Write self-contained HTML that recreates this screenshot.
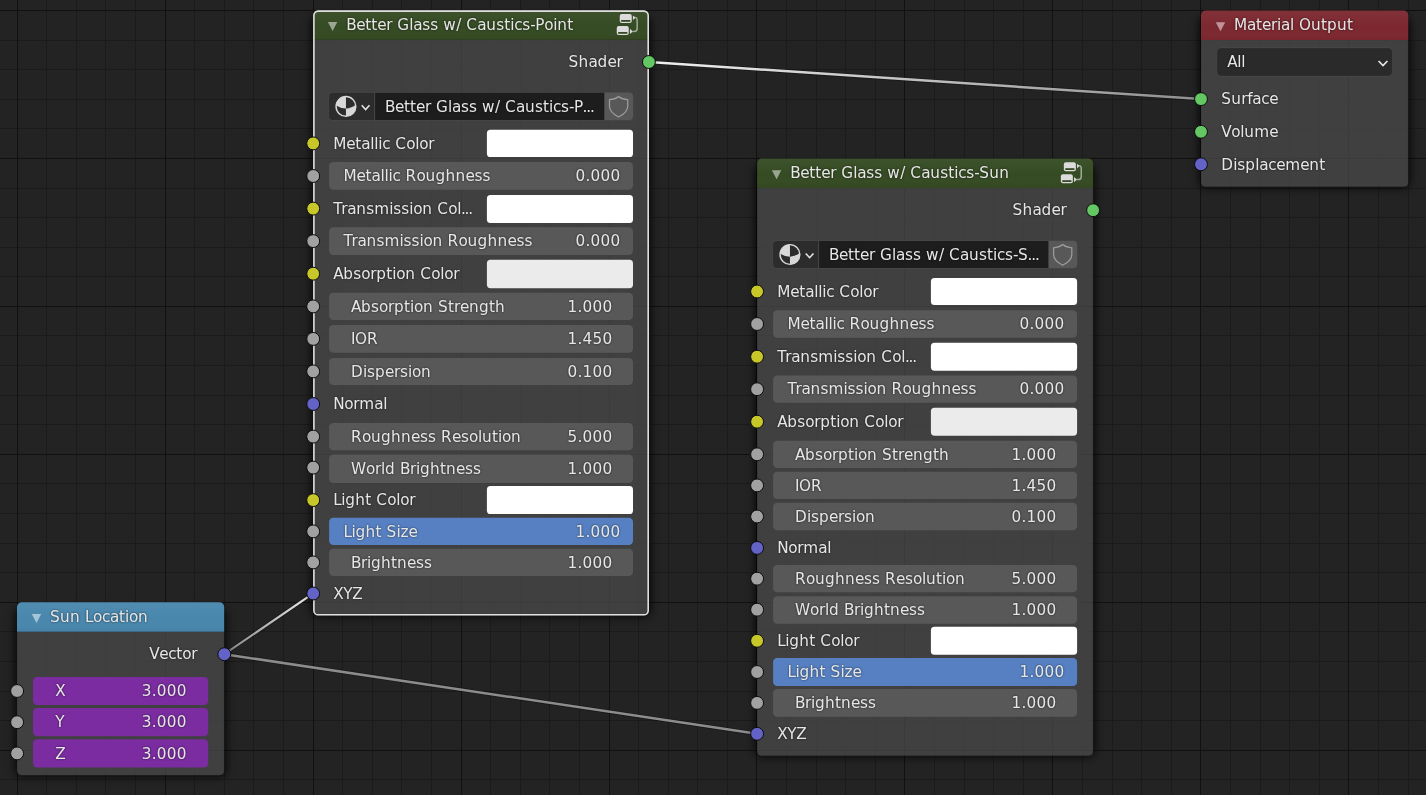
<!DOCTYPE html>
<html lang="en"><head><meta charset="utf-8"><title>Node Editor</title>
<style>html,body{margin:0;padding:0;background:#232323;overflow:hidden}svg{display:block}.t{font-family:"DejaVu Sans","Liberation Sans",sans-serif;font-size:15.25px;fill:#e6e6e6;filter:drop-shadow(0 0.8px 0.9px rgba(0,0,0,0.6))}</style></head><body>
<svg width="1426" height="795" viewBox="0 0 1426 795">
<defs><filter id="sh" x="-20%" y="-20%" width="140%" height="140%"><feGaussianBlur stdDeviation="4.5"/></filter>
<linearGradient id="g1" gradientUnits="userSpaceOnUse" x1="649.1" y1="62" x2="1201" y2="99.1"><stop offset="0" stop-color="#f0f0f0"/><stop offset="1" stop-color="#8f8f8f"/></linearGradient>
<linearGradient id="g2" gradientUnits="userSpaceOnUse" x1="224.3" y1="654.2" x2="313.2" y2="593.4"><stop offset="0" stop-color="#828282"/><stop offset="1" stop-color="#f0f0f0"/></linearGradient>
<linearGradient id="hg" x1="0" y1="0" x2="0" y2="1"><stop offset="0" stop-color="#fff" stop-opacity="0.045"/><stop offset="0.55" stop-color="#fff" stop-opacity="0"/><stop offset="1" stop-color="#000" stop-opacity="0.035"/></linearGradient>
</defs>
<rect width="1426" height="795" fill="#232323"/>
<path d="M46.5 0V795M76.5 0V795M105.5 0V795M135.5 0V795M194.5 0V795M224.5 0V795M253.5 0V795M283.5 0V795M342.5 0V795M372.5 0V795M401.5 0V795M431.5 0V795M490.5 0V795M520.5 0V795M549.5 0V795M579.5 0V795M638.5 0V795M668.5 0V795M697.5 0V795M727.5 0V795M786.5 0V795M816.5 0V795M845.5 0V795M875.5 0V795M934.5 0V795M964.5 0V795M993.5 0V795M1023.5 0V795M1082.5 0V795M1112.5 0V795M1141.5 0V795M1171.5 0V795M1230.5 0V795M1260.5 0V795M1289.5 0V795M1319.5 0V795M1378.5 0V795M1408.5 0V795M0 40.5H1426M0 69.5H1426M0 99.5H1426M0 128.5H1426M0 188.5H1426M0 217.5H1426M0 247.5H1426M0 276.5H1426M0 335.5H1426M0 365.5H1426M0 395.5H1426M0 424.5H1426M0 483.5H1426M0 513.5H1426M0 543.5H1426M0 572.5H1426M0 631.5H1426M0 661.5H1426M0 691.5H1426M0 720.5H1426M0 779.5H1426" stroke="#1b1b1b" stroke-width="1" fill="none" shape-rendering="crispEdges"/>
<path d="M17.5 0V795M165.5 0V795M313.5 0V795M461.5 0V795M609.5 0V795M756.5 0V795M904.5 0V795M1052.5 0V795M1200.5 0V795M1348.5 0V795M0 10.5H1426M0 158.5H1426M0 306.5H1426M0 454.5H1426M0 602.5H1426M0 750.5H1426" stroke="#111111" stroke-width="1" fill="none" shape-rendering="crispEdges"/>
<line x1="649.1" y1="62" x2="1201" y2="99.1" stroke="#000" stroke-opacity="0.28" stroke-width="4.2"/>
<line x1="649.1" y1="62" x2="1201" y2="99.1" stroke="url(#g1)" stroke-width="2.5"/>
<line x1="224.3" y1="654.2" x2="313.2" y2="593.4" stroke="#000" stroke-opacity="0.28" stroke-width="3.85"/>
<line x1="224.3" y1="654.2" x2="313.2" y2="593.4" stroke="url(#g2)" stroke-width="2.15"/>
<line x1="224.3" y1="654.2" x2="757" y2="733.8" stroke="#000" stroke-opacity="0.28" stroke-width="4.2"/>
<line x1="224.3" y1="654.2" x2="757" y2="733.8" stroke="#8c8c8c" stroke-width="2.5"/>
<clipPath id="c1"><path clip-rule="evenodd" d="M0 0H1426V795H0Z M313.6 10.8H648.5V615.1H313.6Z"/></clipPath>
<g clip-path="url(#c1)"><rect x="311.1" y="16.3" width="339.9" height="600.3" rx="7" fill="#000" opacity="0.8" filter="url(#sh)"/></g>
<path d="M313.1 39.8H649V610.8a4.8 4.8 0 0 1 -4.8 4.8H317.9a4.8 4.8 0 0 1 -4.8 -4.8Z" fill="rgba(74,74,74,0.74)"/>
<path d="M313.1 39.8V15.1a4.8 4.8 0 0 1 4.8 -4.8H644.2a4.8 4.8 0 0 1 4.8 4.8V39.8Z" fill="#354b23"/>
<path d="M313.1 39.8V15.1a4.8 4.8 0 0 1 4.8 -4.8H644.2a4.8 4.8 0 0 1 4.8 4.8V39.8Z" fill="url(#hg)"/>
<rect x="313.9" y="11.1" width="334.3" height="603.7" rx="4.4" fill="none" stroke="#dedede" stroke-width="1.6"/>
<path d="M327.9 22.1h9.4l-4.7 9z" fill="#ffffff" fill-opacity="0.5"/>
<text class="t" x="346.2 356.2 365.2 371.2 377.2 386.2 392.2 397.2 409.2 413.2 422.2 430.2 438.2 443.2 456.2 461.2 466.2 477.2 486.2 496.2 504.2 510.2 514.2 522.2 530.2 535.2 544.2 553.2 557.2 567.2" y="30">Better Glass w/ Caustics-Point</text>
<g transform="translate(619.75 14.1)">
<rect x="0" y="0" width="12" height="9" rx="2" fill="#dcdcdc"/><rect x="1.4" y="5.9" width="9.2" height="1.8" fill="#354b23"/>
<rect x="-3" y="12" width="12" height="9" rx="2" fill="#dcdcdc"/><rect x="-1.6" y="17.9" width="9.2" height="1.8" fill="#354b23"/>
<path d="M13.2 1.7V6L16.1 3.5Z M10.2 14.7V19.9L13 17.3Z" fill="#dcdcdc"/>
<path d="M15.8 3.4Q17.4 3.8 17.4 6V14.4Q17.4 17.3 14.6 17.3H12.6" fill="none" stroke="#dcdcdc" stroke-opacity="0.65" stroke-width="1.5"/>
</g>
<text class="t" x="568.4 578.4 588.4 597.4 607.4 616.4" y="67">Shader</text>
<rect x="328.4" y="92.1" width="305.3" height="28.6" rx="4.6" fill="#474747"/>
<path d="M333.1 92.8H374.1V120H333.1a4 4 0 0 1 -4 -4V96.8a4 4 0 0 1 4 -4Z" fill="#2c2c2c"/>
<rect x="375.1" y="92.8" width="229.1" height="27.2" fill="#1d1d1d"/>
<path d="M604.7 92.8H629a4 4 0 0 1 4 4V116a4 4 0 0 1 -4 4H604.7Z" fill="#585858"/>
<g transform="translate(345.95 106.4)">
<circle r="9.9" fill="none" stroke="#d8d8d8" stroke-width="1.4"/>
<path d="M-9.9 -0.9A9.9 9.9 0 0 1 0 -9.9V2.2Q-5.5 1.9 -9.9 -0.9Z M0 2.2Q6 1.7 9.8 -1.6A9.9 9.9 0 0 1 0 9.9Z" fill="#d8d8d8"/>
</g>
<path d="M361.7 105.3l3.9 4.3l3.9 -4.3" fill="none" stroke="#e6e6e6" stroke-width="1.55"/>
<g transform="translate(604.7 92.8)">
<path d="M13.9 3.6C11.2 5.8 7.8 6.7 4.8 6.8V13.5C4.8 18.6 9 21.8 13.9 24.2C18.8 21.8 23 18.6 23 13.5V6.8C20 6.7 16.6 5.8 13.9 3.6Z" fill="none" stroke="#9c9c9c" stroke-width="1.25"/>
</g>
<text class="t" x="384.9 394.9 403.9 409.9 415.9 424.9 430.9 435.9 447.9 451.9 460.9 468.9 476.9 481.9 494.9 499.9 504.9 515.9 524.9 534.9 542.9 548.9 552.9 560.9 568.9 573.9 582.6 586.3 590" y="112">Better Glass w/ Caustics-P...</text>
<text class="t" x="333.2 346.2 355.2 361.2 370.2 374.2 378.2 382.2 390.2 395.2 406.2 415.2 419.2 428.2" y="149">Metallic Color</text>
<rect x="486.9" y="129.8" width="146.1" height="27.2" rx="3.6" fill="#ffffff"/>
<circle cx="313.2" cy="143.4" r="6.45" fill="#c7c729" stroke="#0c0c0c" stroke-width="1"/>
<rect x="329.1" y="161.97" width="303.9" height="27.73" rx="4.2" fill="#585858"/>
<text class="t" x="343.6 356.6 365.6 371.6 380.6 384.6 388.6 392.6 400.6 405.6 416.6 425.6 435.6 445.6 455.6 465.6 474.6 482.6" y="181">Metallic Roughness</text>
<text class="t" x="575.5 585.5 590.5 600.5 610.5" y="181">0.000</text>
<circle cx="313.2" cy="176" r="6.45" fill="#a1a1a1" stroke="#0c0c0c" stroke-width="1"/>
<text class="t" x="333.2 341.2 347.2 356.2 366.2 374.2 389.2 393.2 401.2 409.2 413.2 422.2 432.2 437.2 448.2 457.2 460.9 464.6 468.3" y="214">Transmission Col...</text>
<rect x="486.9" y="195.07" width="146.1" height="28.03" rx="3.6" fill="#ffffff"/>
<circle cx="313.2" cy="208.6" r="6.45" fill="#c7c729" stroke="#0c0c0c" stroke-width="1"/>
<rect x="329.1" y="227.2" width="303.9" height="27.7" rx="4.2" fill="#585858"/>
<text class="t" x="343.6 351.6 357.6 366.6 376.6 384.6 399.6 403.6 411.6 419.6 423.6 432.6 442.6 447.6 458.6 467.6 477.6 487.6 497.6 507.6 516.6 524.6" y="246">Transmission Roughness</text>
<text class="t" x="575.5 585.5 590.5 600.5 610.5" y="246">0.000</text>
<circle cx="313.2" cy="241.1" r="6.45" fill="#a1a1a1" stroke="#0c0c0c" stroke-width="1"/>
<text class="t" x="333.2 343.2 353.2 361.2 370.2 376.2 386.2 392.2 396.2 405.2 415.2 420.2 431.2 440.2 444.2 453.2" y="279">Absorption Color</text>
<rect x="486.9" y="259.8" width="146.1" height="28.35" rx="3.6" fill="#ebebeb"/>
<circle cx="313.2" cy="273.7" r="6.45" fill="#c7c729" stroke="#0c0c0c" stroke-width="1"/>
<rect x="329.1" y="292.75" width="303.9" height="27.3" rx="4.2" fill="#585858"/>
<text class="t" x="351.1 361.1 371.1 379.1 388.1 394.1 404.1 410.1 414.1 423.1 433.1 438.1 448.1 454.1 460.1 469.1 479.1 489.1 495.1" y="312">Absorption Strength</text>
<text class="t" x="567.5 577.5 582.5 592.5 602.5" y="312">1.000</text>
<circle cx="313.2" cy="306.4" r="6.45" fill="#a1a1a1" stroke="#0c0c0c" stroke-width="1"/>
<rect x="329.1" y="325.06" width="303.9" height="27.74" rx="4.2" fill="#585858"/>
<text class="t" x="351.1 355.1 367.1" y="344">IOR</text>
<text class="t" x="567.5 577.5 582.5 592.5 602.5" y="344">1.450</text>
<circle cx="313.2" cy="338.9" r="6.45" fill="#a1a1a1" stroke="#0c0c0c" stroke-width="1"/>
<rect x="329.1" y="358" width="303.9" height="26.95" rx="4.2" fill="#585858"/>
<text class="t" x="351.1 363.1 367.1 375.1 385.1 394.1 400.1 408.1 412.1 421.1" y="377">Dispersion</text>
<text class="t" x="567.5 577.5 582.5 592.5 602.5" y="377">0.100</text>
<circle cx="313.2" cy="371.4" r="6.45" fill="#a1a1a1" stroke="#0c0c0c" stroke-width="1"/>
<text class="t" x="333.2 344.2 353.2 359.2 374.2 383.2" y="409">Normal</text>
<circle cx="313.2" cy="404" r="6.45" fill="#6363c7" stroke="#0c0c0c" stroke-width="1"/>
<rect x="329.1" y="422.95" width="303.9" height="27.3" rx="4.2" fill="#585858"/>
<text class="t" x="351.1 362.1 371.1 381.1 391.1 401.1 411.1 420.1 428.1 436.1 441.1 452.1 461.1 469.1 478.1 482.1 492.1 498.1 502.1 511.1" y="442">Roughness Resolution</text>
<text class="t" x="567.5 577.5 582.5 592.5 602.5" y="442">5.000</text>
<circle cx="313.2" cy="436.6" r="6.45" fill="#a1a1a1" stroke="#0c0c0c" stroke-width="1"/>
<rect x="329.1" y="454.6" width="303.9" height="28.3" rx="4.2" fill="#585858"/>
<text class="t" x="351.1 366.1 375.1 381.1 385.1 395.1 400.1 410.1 416.1 420.1 430.1 440.1 446.1 456.1 465.1 473.1" y="474">World Brightness</text>
<text class="t" x="567.5 577.5 582.5 592.5 602.5" y="474">1.000</text>
<circle cx="313.2" cy="467.6" r="6.45" fill="#a1a1a1" stroke="#0c0c0c" stroke-width="1"/>
<text class="t" x="333.2 341.2 345.2 355.2 365.2 371.2 376.2 387.2 396.2 400.2 409.2" y="505">Light Color</text>
<rect x="486.9" y="486.1" width="146.1" height="27.9" rx="3.6" fill="#ffffff"/>
<circle cx="313.2" cy="500.1" r="6.45" fill="#c7c729" stroke="#0c0c0c" stroke-width="1"/>
<rect x="329.1" y="517.75" width="303.9" height="27.3" rx="4.2" fill="#5680c2"/>
<text class="t" x="343.6 351.6 355.6 365.6 375.6 381.6 386.6 396.6 400.6 408.6" y="537">Light Size</text>
<text class="t" x="575.5 585.5 590.5 600.5 610.5" y="537">1.000</text>
<circle cx="313.2" cy="531.4" r="6.45" fill="#a1a1a1" stroke="#0c0c0c" stroke-width="1"/>
<rect x="329.1" y="548.75" width="303.9" height="27.3" rx="4.2" fill="#585858"/>
<text class="t" x="351.1 361.1 367.1 371.1 381.1 391.1 397.1 407.1 416.1 424.1" y="568">Brightness</text>
<text class="t" x="567.5 577.5 582.5 592.5 602.5" y="568">1.000</text>
<circle cx="313.2" cy="562.4" r="6.45" fill="#a1a1a1" stroke="#0c0c0c" stroke-width="1"/>
<text class="t" x="333.2 343.2 352.2" y="599">XYZ</text>
<circle cx="313.2" cy="593.5" r="6.45" fill="#6363c7" stroke="#0c0c0c" stroke-width="1"/>
<circle cx="648.9" cy="62" r="6.45" fill="#63c763" stroke="#0c0c0c" stroke-width="1"/>
<clipPath id="c2"><path clip-rule="evenodd" d="M0 0H1426V795H0Z M757.6 159H1092.6V755.3H757.6Z"/></clipPath>
<g clip-path="url(#c2)"><rect x="755.1" y="164.5" width="340" height="592.3" rx="7" fill="#000" opacity="0.8" filter="url(#sh)"/></g>
<path d="M757.1 188H1093.1V751a4.8 4.8 0 0 1 -4.8 4.8H761.9a4.8 4.8 0 0 1 -4.8 -4.8Z" fill="rgba(74,74,74,0.74)"/>
<path d="M757.1 188V163.3a4.8 4.8 0 0 1 4.8 -4.8H1088.3a4.8 4.8 0 0 1 4.8 4.8V188Z" fill="#354b23"/>
<path d="M757.1 188V163.3a4.8 4.8 0 0 1 4.8 -4.8H1088.3a4.8 4.8 0 0 1 4.8 4.8V188Z" fill="url(#hg)"/>
<path d="M771.9 170.3h9.4l-4.7 9z" fill="#ffffff" fill-opacity="0.5"/>
<text class="t" x="790.2 800.2 809.2 815.2 821.2 830.2 836.2 841.2 853.2 857.2 866.2 874.2 882.2 887.2 900.2 905.2 910.2 921.2 930.2 940.2 948.2 954.2 958.2 966.2 974.2 979.2 989.2 999.2" y="178">Better Glass w/ Caustics-Sun</text>
<g transform="translate(1063.85 162.3)">
<rect x="0" y="0" width="12" height="9" rx="2" fill="#dcdcdc"/><rect x="1.4" y="5.9" width="9.2" height="1.8" fill="#354b23"/>
<rect x="-3" y="12" width="12" height="9" rx="2" fill="#dcdcdc"/><rect x="-1.6" y="17.9" width="9.2" height="1.8" fill="#354b23"/>
<path d="M13.2 1.7V6L16.1 3.5Z M10.2 14.7V19.9L13 17.3Z" fill="#dcdcdc"/>
<path d="M15.8 3.4Q17.4 3.8 17.4 6V14.4Q17.4 17.3 14.6 17.3H12.6" fill="none" stroke="#dcdcdc" stroke-opacity="0.65" stroke-width="1.5"/>
</g>
<text class="t" x="1012.5 1022.5 1032.5 1041.5 1051.5 1060.5" y="215">Shader</text>
<rect x="772.4" y="240.3" width="305.4" height="28.4" rx="4.6" fill="#474747"/>
<path d="M777.1 241H818.1V268H777.1a4 4 0 0 1 -4 -4V245a4 4 0 0 1 4 -4Z" fill="#2c2c2c"/>
<rect x="819.1" y="241" width="229.2" height="27" fill="#1d1d1d"/>
<path d="M1048.8 241H1073.1a4 4 0 0 1 4 4V264a4 4 0 0 1 -4 4H1048.8Z" fill="#585858"/>
<g transform="translate(789.95 254.5)">
<circle r="9.9" fill="none" stroke="#d8d8d8" stroke-width="1.4"/>
<path d="M-9.9 -0.9A9.9 9.9 0 0 1 0 -9.9V2.2Q-5.5 1.9 -9.9 -0.9Z M0 2.2Q6 1.7 9.8 -1.6A9.9 9.9 0 0 1 0 9.9Z" fill="#d8d8d8"/>
</g>
<path d="M805.7 253.4l3.9 4.3l3.9 -4.3" fill="none" stroke="#e6e6e6" stroke-width="1.55"/>
<g transform="translate(1048.8 241)">
<path d="M13.9 3.6C11.2 5.8 7.8 6.7 4.8 6.8V13.5C4.8 18.6 9 21.8 13.9 24.2C18.8 21.8 23 18.6 23 13.5V6.8C20 6.7 16.6 5.8 13.9 3.6Z" fill="none" stroke="#9c9c9c" stroke-width="1.25"/>
</g>
<text class="t" x="828.9 838.9 847.9 853.9 859.9 868.9 874.9 879.9 891.9 895.9 904.9 912.9 920.9 925.9 938.9 943.9 948.9 959.9 968.9 978.9 986.9 992.9 996.9 1004.9 1012.9 1017.9 1027.6 1031.3 1035" y="260">Better Glass w/ Caustics-S...</text>
<text class="t" x="777.2 790.2 799.2 805.2 814.2 818.2 822.2 826.2 834.2 839.2 850.2 859.2 863.2 872.2" y="297">Metallic Color</text>
<rect x="930.9" y="277.9" width="146.2" height="27.2" rx="3.6" fill="#ffffff"/>
<circle cx="757.1" cy="291.5" r="6.45" fill="#c7c729" stroke="#0c0c0c" stroke-width="1"/>
<rect x="773.1" y="310.35" width="304" height="27.3" rx="4.2" fill="#585858"/>
<text class="t" x="787.6 800.6 809.6 815.6 824.6 828.6 832.6 836.6 844.6 849.6 860.6 869.6 879.6 889.6 899.6 909.6 918.6 926.6" y="329">Metallic Roughness</text>
<text class="t" x="1019.6 1029.6 1034.6 1044.6 1054.6" y="329">0.000</text>
<circle cx="757.1" cy="324" r="6.45" fill="#a1a1a1" stroke="#0c0c0c" stroke-width="1"/>
<text class="t" x="777.2 785.2 791.2 800.2 810.2 818.2 833.2 837.2 845.2 853.2 857.2 866.2 876.2 881.2 892.2 901.2 904.9 908.6 912.3" y="362">Transmission Col...</text>
<rect x="930.9" y="342.7" width="146.2" height="28" rx="3.6" fill="#ffffff"/>
<circle cx="757.1" cy="356.7" r="6.45" fill="#c7c729" stroke="#0c0c0c" stroke-width="1"/>
<rect x="773.1" y="375.55" width="304" height="27.3" rx="4.2" fill="#585858"/>
<text class="t" x="787.6 795.6 801.6 810.6 820.6 828.6 843.6 847.6 855.6 863.6 867.6 876.6 886.6 891.6 902.6 911.6 921.6 931.6 941.6 951.6 960.6 968.6" y="394">Transmission Roughness</text>
<text class="t" x="1019.6 1029.6 1034.6 1044.6 1054.6" y="394">0.000</text>
<circle cx="757.1" cy="389.2" r="6.45" fill="#a1a1a1" stroke="#0c0c0c" stroke-width="1"/>
<text class="t" x="777.2 787.2 797.2 805.2 814.2 820.2 830.2 836.2 840.2 849.2 859.2 864.2 875.2 884.2 888.2 897.2" y="427">Absorption Color</text>
<rect x="930.9" y="407.7" width="146.2" height="28" rx="3.6" fill="#ebebeb"/>
<circle cx="757.1" cy="421.7" r="6.45" fill="#c7c729" stroke="#0c0c0c" stroke-width="1"/>
<rect x="773.1" y="440.65" width="304" height="27.3" rx="4.2" fill="#585858"/>
<text class="t" x="795.1 805.1 815.1 823.1 832.1 838.1 848.1 854.1 858.1 867.1 877.1 882.1 892.1 898.1 904.1 913.1 923.1 933.1 939.1" y="460">Absorption Strength</text>
<text class="t" x="1011.6 1021.6 1026.6 1036.6 1046.6" y="460">1.000</text>
<circle cx="757.1" cy="454.3" r="6.45" fill="#a1a1a1" stroke="#0c0c0c" stroke-width="1"/>
<rect x="773.1" y="471.75" width="304" height="27.3" rx="4.2" fill="#585858"/>
<text class="t" x="795.1 799.1 811.1" y="491">IOR</text>
<text class="t" x="1011.6 1021.6 1026.6 1036.6 1046.6" y="491">1.450</text>
<circle cx="757.1" cy="485.4" r="6.45" fill="#a1a1a1" stroke="#0c0c0c" stroke-width="1"/>
<rect x="773.1" y="502.85" width="304" height="27.3" rx="4.2" fill="#585858"/>
<text class="t" x="795.1 807.1 811.1 819.1 829.1 838.1 844.1 852.1 856.1 865.1" y="522">Dispersion</text>
<text class="t" x="1011.6 1021.6 1026.6 1036.6 1046.6" y="522">0.100</text>
<circle cx="757.1" cy="516.5" r="6.45" fill="#a1a1a1" stroke="#0c0c0c" stroke-width="1"/>
<text class="t" x="777.2 788.2 797.2 803.2 818.2 827.2" y="553">Normal</text>
<circle cx="757.1" cy="547.9" r="6.45" fill="#6363c7" stroke="#0c0c0c" stroke-width="1"/>
<rect x="773.1" y="565.05" width="304" height="27.3" rx="4.2" fill="#585858"/>
<text class="t" x="795.1 806.1 815.1 825.1 835.1 845.1 855.1 864.1 872.1 880.1 885.1 896.1 905.1 913.1 922.1 926.1 936.1 942.1 946.1 955.1" y="584">Roughness Resolution</text>
<text class="t" x="1011.6 1021.6 1026.6 1036.6 1046.6" y="584">5.000</text>
<circle cx="757.1" cy="578.7" r="6.45" fill="#a1a1a1" stroke="#0c0c0c" stroke-width="1"/>
<rect x="773.1" y="596.2" width="304" height="27.6" rx="4.2" fill="#585858"/>
<text class="t" x="795.1 810.1 819.1 825.1 829.1 839.1 844.1 854.1 860.1 864.1 874.1 884.1 890.1 900.1 909.1 917.1" y="615">World Brightness</text>
<text class="t" x="1011.6 1021.6 1026.6 1036.6 1046.6" y="615">1.000</text>
<circle cx="757.1" cy="609.7" r="6.45" fill="#a1a1a1" stroke="#0c0c0c" stroke-width="1"/>
<text class="t" x="777.2 785.2 789.2 799.2 809.2 815.2 820.2 831.2 840.2 844.2 853.2" y="646">Light Color</text>
<rect x="930.9" y="626.8" width="146.2" height="28" rx="3.6" fill="#ffffff"/>
<circle cx="757.1" cy="640.8" r="6.45" fill="#c7c729" stroke="#0c0c0c" stroke-width="1"/>
<rect x="773.1" y="658" width="304" height="28.1" rx="4.2" fill="#5680c2"/>
<text class="t" x="787.6 795.6 799.6 809.6 819.6 825.6 830.6 840.6 844.6 852.6" y="677">Light Size</text>
<text class="t" x="1019.6 1029.6 1034.6 1044.6 1054.6" y="677">1.000</text>
<circle cx="757.1" cy="672" r="6.45" fill="#a1a1a1" stroke="#0c0c0c" stroke-width="1"/>
<rect x="773.1" y="689" width="304" height="27.8" rx="4.2" fill="#585858"/>
<text class="t" x="795.1 805.1 811.1 815.1 825.1 835.1 841.1 851.1 860.1 868.1" y="708">Brightness</text>
<text class="t" x="1011.6 1021.6 1026.6 1036.6 1046.6" y="708">1.000</text>
<circle cx="757.1" cy="702.9" r="6.45" fill="#a1a1a1" stroke="#0c0c0c" stroke-width="1"/>
<text class="t" x="777.2 787.2 796.2" y="739">XYZ</text>
<circle cx="757.1" cy="733.8" r="6.45" fill="#6363c7" stroke="#0c0c0c" stroke-width="1"/>
<circle cx="1093.1" cy="210.2" r="6.45" fill="#63c763" stroke="#0c0c0c" stroke-width="1"/>
<clipPath id="c3"><path clip-rule="evenodd" d="M0 0H1426V795H0Z M17.5 602.8H223.7V774.7H17.5Z"/></clipPath>
<g clip-path="url(#c3)"><rect x="15" y="608.3" width="211.2" height="167.9" rx="7" fill="#000" opacity="0.8" filter="url(#sh)"/></g>
<path d="M17 631.8H224.2V770.4a4.8 4.8 0 0 1 -4.8 4.8H21.8a4.8 4.8 0 0 1 -4.8 -4.8Z" fill="rgba(74,74,74,0.74)"/>
<path d="M17 631.8V607.1a4.8 4.8 0 0 1 4.8 -4.8H219.4a4.8 4.8 0 0 1 4.8 4.8V631.8Z" fill="#4987ad"/>
<path d="M17 631.8V607.1a4.8 4.8 0 0 1 4.8 -4.8H219.4a4.8 4.8 0 0 1 4.8 4.8V631.8Z" fill="url(#hg)"/>
<path d="M31.8 614.1h9.4l-4.7 9z" fill="#ffffff" fill-opacity="0.5"/>
<text class="t" x="50.1 60.1 70.1 80.1 85.1 93.1 102.1 110.1 119.1 125.1 129.1 138.1" y="622">Sun Location</text>
<text class="t" x="149.3 159.3 168.3 176.3 182.3 191.3" y="659">Vector</text>
<rect x="33" y="676.9" width="175.2" height="28.2" rx="4.2" fill="#7a2ca0"/>
<text class="t" x="55.3" y="696">X</text>
<text class="t" x="141.8 151.8 156.8 166.8 176.8" y="696">3.000</text>
<circle cx="17.1" cy="691" r="6.45" fill="#a1a1a1" stroke="#0c0c0c" stroke-width="1"/>
<rect x="33" y="708.1" width="175.2" height="28.2" rx="4.2" fill="#7a2ca0"/>
<text class="t" x="55.3" y="727">Y</text>
<text class="t" x="141.8 151.8 156.8 166.8 176.8" y="727">3.000</text>
<circle cx="17.1" cy="722.2" r="6.45" fill="#a1a1a1" stroke="#0c0c0c" stroke-width="1"/>
<rect x="33" y="739.3" width="175.2" height="28.2" rx="4.2" fill="#7a2ca0"/>
<text class="t" x="55.3" y="759">Z</text>
<text class="t" x="141.8 151.8 156.8 166.8 176.8" y="759">3.000</text>
<circle cx="17.1" cy="753.4" r="6.45" fill="#a1a1a1" stroke="#0c0c0c" stroke-width="1"/>
<circle cx="224.3" cy="654.2" r="6.45" fill="#6363c7" stroke="#0c0c0c" stroke-width="1"/>
<clipPath id="c4"><path clip-rule="evenodd" d="M0 0H1426V795H0Z M1201.5 11H1407.8V186.3H1201.5Z"/></clipPath>
<g clip-path="url(#c4)"><rect x="1199" y="16.5" width="211.3" height="171.3" rx="7" fill="#000" opacity="0.8" filter="url(#sh)"/></g>
<path d="M1201 40H1408.3V182a4.8 4.8 0 0 1 -4.8 4.8H1205.8a4.8 4.8 0 0 1 -4.8 -4.8Z" fill="rgba(74,74,74,0.74)"/>
<path d="M1201 40V15.3a4.8 4.8 0 0 1 4.8 -4.8H1403.5a4.8 4.8 0 0 1 4.8 4.8V40Z" fill="#7d2830"/>
<path d="M1201 40V15.3a4.8 4.8 0 0 1 4.8 -4.8H1403.5a4.8 4.8 0 0 1 4.8 4.8V40Z" fill="url(#hg)"/>
<path d="M1215.8 22.3h9.4l-4.7 9z" fill="#ffffff" fill-opacity="0.5"/>
<text class="t" x="1234.1 1247.1 1256.1 1262.1 1271.1 1277.1 1281.1 1290.1 1294.1 1299.1 1311.1 1321.1 1327.1 1337.1 1347.1" y="30">Material Output</text>
<rect x="1216.9" y="47.9" width="175.4" height="28.2" rx="4.2" fill="#2a2a2a" stroke="#fff" stroke-opacity="0.05" stroke-width="1"/>
<text class="t" x="1227.3 1237.3 1241.3" y="67">All</text>
<path d="M1378.6 61l4.4 4.5l4.4 -4.5" fill="none" stroke="#e6e6e6" stroke-width="1.7"/>
<text class="t" x="1221.3 1231.3 1241.3 1247.3 1252.3 1261.3 1269.3" y="104">Surface</text>
<circle cx="1201" cy="99.1" r="6.45" fill="#63c763" stroke="#0c0c0c" stroke-width="1"/>
<text class="t" x="1221.3 1231.3 1240.3 1244.3 1254.3 1269.3" y="137">Volume</text>
<circle cx="1201" cy="131.8" r="6.45" fill="#63c763" stroke="#0c0c0c" stroke-width="1"/>
<text class="t" x="1221.3 1233.3 1237.3 1245.3 1255.3 1259.3 1268.3 1276.3 1285.3 1300.3 1309.3 1319.3" y="170">Displacement</text>
<circle cx="1201" cy="164.3" r="6.45" fill="#6363c7" stroke="#0c0c0c" stroke-width="1"/>
</svg></body></html>
